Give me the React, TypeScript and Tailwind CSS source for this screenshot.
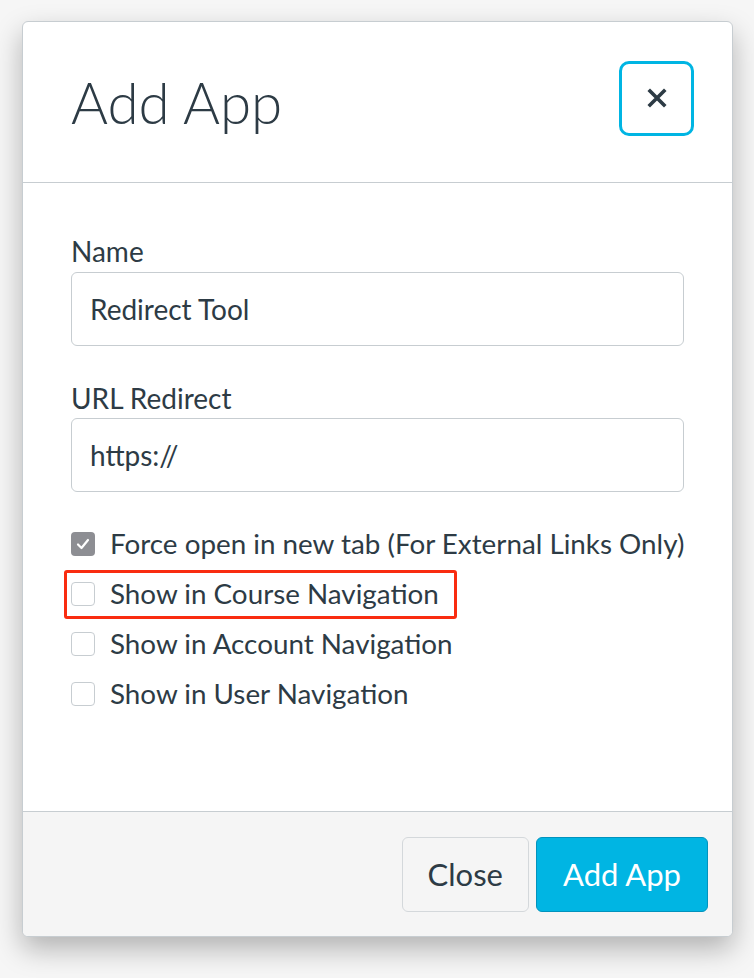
import React from "react";

const font = { fontFamily: "Lato, 'Noto Sans', sans-serif" };

function Checkbox({ checked }: { checked?: boolean }) {
  if (checked) {
    return (
      <span className="flex h-[24px] w-[24px] shrink-0 items-center justify-center rounded-[4px] bg-[#8d8e93]">
        <svg width="14" height="12" viewBox="0 0 14 12" fill="none">
          <path d="M2 6.5 L5.5 10 L12 2" stroke="#ffffff" strokeWidth="2.2" strokeLinecap="round" strokeLinejoin="round" />
        </svg>
      </span>
    );
  }
  return <span className="h-[24px] w-[24px] shrink-0 rounded-[4px] border border-[#c7cdd1] bg-white" />;
}

function Row({ label, checked, highlight }: { label: string; checked?: boolean; highlight?: boolean }) {
  return (
    <div className="relative flex h-[50px] items-center">
      {highlight && (
        <div className="absolute left-[-7px] top-[1px] h-[49px] w-[393px] rounded-[3px] border-[3px] border-[#f92c10]" />
      )}
      <Checkbox checked={checked} />
      <span className="ml-[15px] whitespace-nowrap text-[27.8px] leading-none text-[#2d3b45]">{label}</span>
    </div>
  );
}

export default function App() {
  return (
    <div className="h-[978px] w-[754px] bg-[#f6f6f6] pl-[22px] pt-[21px]" style={font}>
      <div className="flex h-[916px] w-[711px] flex-col overflow-hidden rounded-[6px] border border-[#c7cdd1] bg-white shadow-[0_12px_28px_rgba(0,0,0,0.28)]">
        <div className="flex h-[161px] shrink-0 items-center justify-between border-b border-[#c7cdd1] pl-[48px] pr-[38px]">
          <h1 className="text-[56.5px] font-light leading-none text-[#2d3b45]">Add App</h1>
          <button className="mb-[8px] flex h-[75px] w-[75px] items-center justify-center rounded-[10px] border-[3px] border-[#00b5e3] bg-white">
            <svg width="20" height="20" viewBox="0 0 20 20">
              <path d="M3 3 L17 17 M17 3 L3 17" stroke="#2d3b45" strokeWidth="3.6" strokeLinecap="square" />
            </svg>
          </button>
        </div>
        <div className="flex-1 px-[48px] pt-[50px] text-[#2d3b45]">
          <label className="block text-[28px] leading-[36px]">Name</label>
          <div className="mt-[3px] flex h-[74px] w-[613px] items-center rounded-[6px] border border-[#c7cdd1] px-[18px] text-[28px]">
            Redirect Tool
          </div>
          <label className="mt-[34px] block text-[28px] leading-[36px]">URL Redirect</label>
          <div className="mt-[2px] flex h-[74px] w-[613px] items-center rounded-[6px] border border-[#c7cdd1] px-[18px] text-[28px]">
            https://
          </div>
          <div className="mt-[27px] flex flex-col">
            <Row label="Force open in new tab (For External Links Only)" checked />
            <Row label="Show in Course Navigation" highlight />
            <Row label="Show in Account Navigation" />
            <Row label="Show in User Navigation" />
          </div>
        </div>
        <div className="flex h-[125px] shrink-0 items-center justify-end gap-[7px] border-t border-[#c7cdd1] bg-[#f5f5f5] pr-[24px]">
          <button className="h-[75px] rounded-[6px] border border-[#d4d8db] bg-[#f5f5f5] px-[25px] text-[31px] text-[#2d3b45]">
            Close
          </button>
          <button className="h-[75px] w-[172px] rounded-[6px] border border-[#0293bd] bg-[#00b5e3] text-[31px] text-white">
            Add App
          </button>
        </div>
      </div>
    </div>
  );
}
